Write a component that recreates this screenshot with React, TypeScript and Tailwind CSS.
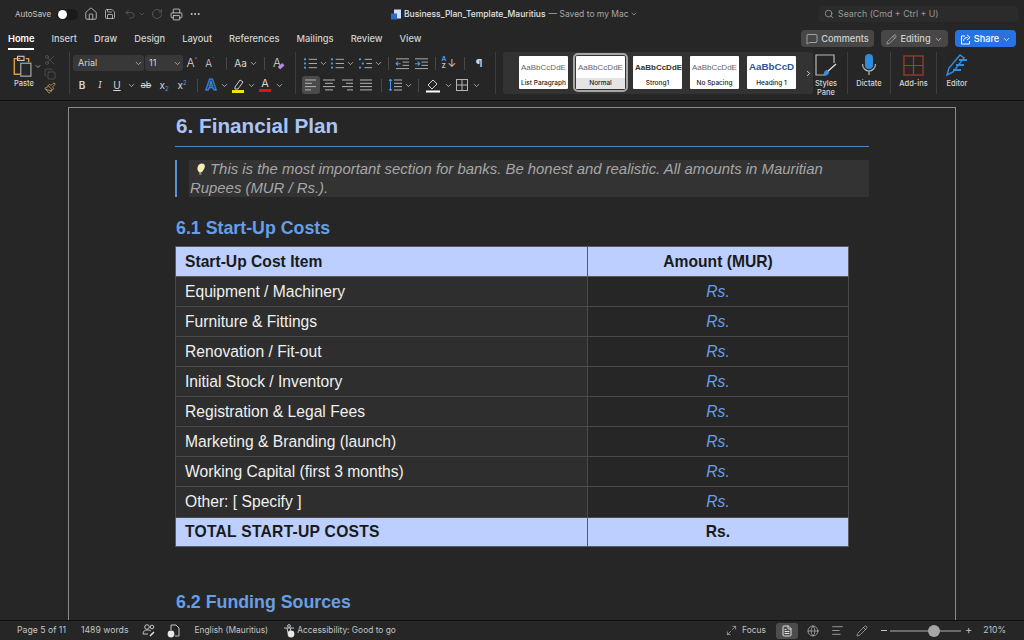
import React from "react";
import {
  ChevronDown, ChevronRight, Home, Save, Undo2, RotateCw, Printer, MoreHorizontal, Search,
  MessageSquare, Pencil, Maximize2, Globe, AlignLeft, FileText, Scissors, Copy, Paintbrush,
} from "lucide-react";

const Chev = ({ w = 10, className = "text-[#c8c8c8]" }: { w?: number; className?: string }) => (
  <span className="flex items-center justify-center shrink-0" style={{ width: w }}>
    <ChevronDown size={9} strokeWidth={2} className={className} />
  </span>
);

const Slot = ({ w, children, className = "" }: { w: number; children?: React.ReactNode; className?: string }) => (
  <span className={`flex items-center justify-center shrink-0 h-[18px] ${className}`} style={{ width: w }}>
    {children}
  </span>
);

const Div = ({ w }: { w: number }) => (
  <Slot w={w}>
    <span className="block w-px h-[13px] bg-[#484848]" />
  </Slot>
);

// lines used by list + alignment icons
const Lines = ({ kind }: { kind: "left" | "center" | "right" | "justify" }) => {
  const rows = {
    left: [[2, 13], [2, 9], [2, 13], [2, 8]],
    center: [[2, 14], [4, 12], [2, 14], [4, 12]],
    right: [[3, 14], [7, 14], [3, 14], [8, 14]],
    justify: [[2, 14], [2, 14], [2, 14], [2, 14]],
  }[kind];
  return (
    <svg width="16" height="14" viewBox="0 0 16 14" stroke="#b4b4b4" strokeWidth="1">
      {rows.map((r, i) => (
        <line key={i} x1={r[0]} x2={r[1]} y1={2 + i * 3.3} y2={2 + i * 3.3} />
      ))}
    </svg>
  );
};

const ListIcon = ({ kind }: { kind: "bullet" | "num" | "multi" }) => (
  <svg width="15" height="13" viewBox="0 0 16 14">
    <g stroke="#b4b4b4" strokeWidth="1">
      <line x1={kind === "multi" ? 7 : 6} x2="15" y1="2.5" y2="2.5" />
      <line x1={kind === "multi" ? 9 : 6} x2="15" y1="7" y2="7" />
      <line x1={kind === "multi" ? 7 : 6} x2="15" y1="11.5" y2="11.5" />
    </g>
    <g fill="#4a9be8">
      <rect x="1" y="1.5" width="2.2" height="2" />
      <rect x={kind === "multi" ? 4 : 1} y="6" width="2.2" height="2" />
      <rect x="1" y="10.4" width="2.2" height="2" />
    </g>
  </svg>
);

const Indent = ({ flip }: { flip?: boolean }) => (
  <svg width="15" height="13" viewBox="0 0 16 14">
    <g stroke="#b4b4b4" strokeWidth="1">
      <line x1="1" x2="15" y1="2" y2="2" />
      <line x1="8" x2="15" y1="5.5" y2="5.5" />
      <line x1="8" x2="15" y1="9" y2="9" />
      <line x1="1" x2="15" y1="12.5" y2="12.5" />
    </g>
    <path d={flip ? "M1 7.2h5M4 5l2.2 2.2L4 9.4" : "M6 7.2H1M3.2 5L1 7.2l2.2 2.2"} stroke="#4a9be8" strokeWidth="1.1" fill="none" />
  </svg>
);

const StyleCard = ({ sample, name, cls = "text-[#666] text-[8px]", selected }: { sample: string; name: string; cls?: string; selected?: boolean }) => (
  <div className={`shrink-0 rounded-[2px] -mt-px ${selected ? "outline-2 outline-[#a6a6a6] outline-offset-[1px]" : ""}`}>
    <div className="w-[49px] h-[33px] bg-white flex flex-col rounded-[1px]">
      <div className={`h-[22px] pt-px flex items-center pl-[2px] whitespace-nowrap font-['Liberation_Sans',Arial,sans-serif] ${cls}`}>{sample}</div>
      <div className={`h-[11px] leading-[10px] text-center text-[6.5px] text-[#222] font-medium ${selected ? "bg-[#e4e4e4]" : ""}`}>{name}</div>
    </div>
  </div>
);

const BigBtn = ({ icon, label, w }: { icon: React.ReactNode; label: React.ReactNode; w: number }) => (
  <div className="flex flex-col items-center shrink-0" style={{ width: w }}>
    <div className="h-[26px] flex items-center justify-center">{icon}</div>
    <div className="text-[7.5px] leading-[9px] text-center text-[#d6d6d6] font-medium mt-px whitespace-nowrap">{label}</div>
  </div>
);

const BarDiv = () => <span className="block w-px h-[42px] bg-[#3d3d3d] shrink-0" />;

const Ribbon = () => (
  <div className="h-[52px] flex items-start shrink-0 bg-[#262626] text-[#d6d6d6]">
    {/* clipboard */}
    <div className="w-[66px] flex pl-[10px] pt-[6px] shrink-0">
      <div className="flex flex-col items-center w-[28px]">
        <svg width="24" height="24" viewBox="0 0 26 24" fill="none">
          <path d="M9 4H2.5v17H9" stroke="#d79a3c" strokeWidth="1.6" />
          <path d="M15 4h3v4" stroke="#d79a3c" strokeWidth="1.6" />
          <rect x="6" y="1.5" width="7" height="4.5" stroke="#c9c9c9" strokeWidth="1.2" />
          <rect x="9.5" y="9" width="11" height="14" stroke="#a8a8a8" strokeWidth="1.3" />
        </svg>
        <span className="text-[7.5px] leading-[9px] mt-px font-medium">Paste</span>
      </div>
      <span className="-ml-[4px] h-[24px] flex"><Chev w={8} /></span>
      <div className="flex flex-col items-center ml-[2px] gap-[2px]">
        <Scissors size={12} className="text-[#5c6670]" strokeWidth={1.2} />
        <Copy size={12} className="text-[#666]" strokeWidth={1.2} />
        <Paintbrush size={12} className="text-[#d6b26a]" strokeWidth={1.5} />
      </div>
    </div>
    <Slot w={7} className="!h-[42px] mt-[4px]"><span className="block w-px h-[42px] bg-[#3d3d3d]" /></Slot>
    {/* font */}
    <div className="w-[218px] shrink-0 pt-[7px]">
      <div className="flex items-center h-[16px]">
        <div className="w-[71px] h-[16px] bg-[#383838] rounded-[3px] flex items-center justify-between pl-[5px] pr-[1px] text-[9px]">
          Arial
          <Chev />
        </div>
        <div className="w-[38px] ml-px h-[16px] bg-[#383838] rounded-[3px] flex items-center justify-between pl-[4px] pr-[1px] text-[9px]">
          11
          <Chev />
        </div>
        <Slot w={18} className="text-[12px] font-light">A<span className="text-[7px] text-[#4a9be8] -mt-[6px]">^</span></Slot>
        <Slot w={18} className="text-[10px] font-light">A<span className="text-[7px] text-[#4a9be8] -mt-[6px]">ˇ</span></Slot>
        <Div w={14} />
        <Slot w={15} className="text-[10px]">Aa</Slot>
        <Chev />
        <Div w={12} />
        <Slot w={18} className="text-[12px] font-light">
          A
          <svg className="-ml-[4px] mt-[5px]" width="8" height="8" viewBox="0 0 8 8">
            <rect x="1" y="2.5" width="6" height="3.5" rx="0.8" transform="rotate(-40 4 4)" fill="#b58ad8" />
          </svg>
        </Slot>
      </div>
      <div className="flex items-center mt-[5px] h-[18px] text-[10px]">
        <Slot w={18} className="font-semibold">B</Slot>
        <Slot w={18} className="italic font-serif">I</Slot>
        <Slot w={16} className="underline">U</Slot>
        <Chev w={12} />
        <Slot w={18} className="line-through text-[9px]">ab</Slot>
        <Slot w={18}>x<span className="text-[6px] text-[#4a9be8] mt-[6px]">2</span></Slot>
        <Slot w={18}>x<span className="text-[6px] text-[#4a9be8] -mt-[6px]">2</span></Slot>
        <Div w={12} />
        <Slot w={16} className="text-[15px] font-bold text-[#1d3a5c] [-webkit-text-stroke:1px_#3f8fdc]">A</Slot>
        <Chev />
        <Slot w={17}>
          <svg width="14" height="15" viewBox="0 0 14 15" fill="none">
            <path d="M4 9l5-7 3 2-5 7H4z" stroke="#d0d0d0" />
            <rect x="1" y="12" width="12" height="3" fill="#f4e400" />
          </svg>
        </Slot>
        <Chev />
        <Slot w={18}>
          <span className="flex flex-col items-center leading-[11px] text-[11px]">
            A<span className="block w-[12px] h-[3px] bg-[#e81010]" />
          </span>
        </Slot>
        <Chev />
      </div>
    </div>
    <Slot w={8} className="!h-[42px] mt-[4px]"><span className="block w-px h-[42px] bg-[#3d3d3d]" /></Slot>
    {/* paragraph */}
    <div className="w-[189px] pl-[3px] shrink-0 pt-[7px]">
      <div className="flex items-center h-[16px]">
        <Slot w={16}><ListIcon kind="bullet" /></Slot>
        <Chev />
        <Slot w={1} />
        <Slot w={16}><ListIcon kind="num" /></Slot>
        <Chev />
        <Slot w={2} />
        <Slot w={16}><ListIcon kind="multi" /></Slot>
        <Chev />
        <Div w={10} />
        <Slot w={18}><Indent /></Slot>
        <Slot w={1} />
        <Slot w={18}><Indent flip /></Slot>
        <Div w={10} />
        <Slot w={18}>
          <span className="flex flex-col text-[6.5px] leading-[7px] font-bold text-[#4a9be8]">A<span className="text-[#c4c4c4]">Z</span></span>
          <span className="text-[11px] text-[#c4c4c4] ml-[1px]">↓</span>
        </Slot>
        <Div w={12} />
        <Slot w={18} className="text-[11px] font-bold">¶</Slot>
      </div>
      <div className="flex items-center mt-[5px] h-[18px]">
        <Slot w={18} className="bg-[#4a4a4a] rounded-[3px]"><Lines kind="left" /></Slot>
        <Slot w={18}><Lines kind="center" /></Slot>
        <Slot w={18}><Lines kind="right" /></Slot>
        <Slot w={1} />
        <Slot w={18}><Lines kind="justify" /></Slot>
        <Div w={12} />
        <Slot w={16}>
          <svg width="14" height="14" viewBox="0 0 14 14">
            <g stroke="#b4b4b4" strokeWidth="1"><line x1="6" x2="14" y1="2" y2="2" /><line x1="6" x2="14" y1="5.3" y2="5.3" /><line x1="6" x2="14" y1="8.6" y2="8.6" /><line x1="6" x2="14" y1="12" y2="12" /></g>
            <path d="M2.5 1v12M1 3l1.5-2L4 3M1 11l1.5 2L4 11" stroke="#4a9be8" fill="none" />
          </svg>
        </Slot>
        <Chev />
        <Div w={10} />
        <Slot w={20}>
          <svg width="16" height="15" viewBox="0 0 16 15" fill="none">
            <path d="M3 7l5-5 4 4-5 5z" stroke="#d0d0d0" />
            <rect x="1" y="12.5" width="14" height="2" fill="#fff" />
          </svg>
        </Slot>
        <Chev />
        <Slot w={18}>
          <svg width="14" height="14" viewBox="0 0 14 14" stroke="#b4b4b4" fill="none"><rect x="1.5" y="1.5" width="11" height="11" /><path d="M7 1.5v11M1.5 7h11" /></svg>
        </Slot>
        <Chev />
      </div>
    </div>
    <Slot w={15} className="!h-[42px] mt-[4px]"><span className="block w-px h-[42px] bg-[#3d3d3d]" /></Slot>
    {/* style gallery */}
    <div className="w-[310px] h-[42px] mt-[4px] bg-[#333333] rounded-[3px] shrink-0 flex items-center pl-[16px] gap-[8px]">
      <StyleCard sample="AaBbCcDdE" name="List Paragraph" />
      <StyleCard sample="AaBbCcDdE" name="Normal" selected />
      <StyleCard sample="AaBbCcDdE" name="Strong1" cls="text-[8px] font-bold text-[#333]" />
      <StyleCard sample="AaBbCcDdE" name="No Spacing" />
      <StyleCard sample="AaBbCcD" name="Heading 1" cls="text-[9.8px] font-bold text-[#2f5597]" />
      <span className="flex-1 flex justify-center"><ChevronRight size={9} strokeWidth={2.5} /></span>
    </div>
    <div className="flex items-start pt-[4px] gap-[8px]">
      <BigBtn
        w={26}
        label={<>Styles<br />Pane</>}
        icon={
          <svg width="24" height="24" viewBox="0 0 24 24" fill="none">
            <path d="M20 10V2H2v20h9" stroke="#b8b8b8" strokeWidth="1.2" />
            <path d="M22 11l-9 8" stroke="#e0e0e0" strokeWidth="1.4" />
            <path d="M9 23c3 0 6-1 6-4l-2-2c-3 0-3 4-4 6z" fill="#3f8fdc" />
          </svg>
        }
      />
      <BarDiv />
      <BigBtn
        w={26}
        label="Dictate"
        icon={
          <svg width="16" height="24" viewBox="0 0 16 24" fill="none">
            <rect x="4" y="1" width="8" height="15" rx="4" fill="#2f8de0" />
            <path d="M1.5 11c0 4 3 7 6.5 7s6.5-3 6.5-7M8 18v4" stroke="#b8b8b8" strokeWidth="1.2" />
          </svg>
        }
      />
      <BarDiv />
      <BigBtn
        w={29}
        label="Add-ins"
        icon={
          <svg width="21" height="21" viewBox="0 0 22 22" fill="none" stroke="#a83a24" strokeWidth="1.3">
            <rect x="1" y="1" width="20" height="20" />
            <path d="M11 1v20M1 11h20" />
          </svg>
        }
      />
      <BarDiv />
      <BigBtn
        w={24}
        label="Editor"
        icon={
          <svg width="24" height="24" viewBox="0 0 24 24" fill="none" stroke="#2f8de0" strokeWidth="1.5">
            <path d="M2 22l2-7L15 2l4 3L8 19z" />
            <path d="M14 7h8M11 12h8M8 17h8" strokeWidth="2" />
          </svg>
        }
      />
    </div>
  </div>
);

const rows = [
  "Equipment / Machinery",
  "Furniture & Fittings",
  "Renovation / Fit-out",
  "Initial Stock / Inventory",
  "Registration & Legal Fees",
  "Marketing & Branding (launch)",
  "Working Capital (first 3 months)",
];

const Page = () => (
  <div className="flex-1 min-h-0 overflow-hidden bg-[#262626] pt-[6px] pl-[68px] border-t border-[#0d0d0d]">
    <div className="w-[888px] h-[520px] border-l border-r border-t border-[#8a8a8a] pl-[106px] pr-[86px] font-['Liberation_Sans',Arial,sans-serif]">
      <h1 className="text-[20.7px] leading-[25px] font-bold text-[#a9c4f7] pl-px pt-[5px] pb-[8px] border-b border-[#4f86c6]">6. Financial Plan</h1>
      <div className="mt-[13px] h-[37px] flex">
        <div className="w-[2px] bg-[#5b92d6] shrink-0" />
        <div className="ml-[12px] flex-1 bg-[#333333] text-[14.9px] leading-[19px] italic text-[#a6a6a6] pl-[1px]">
          <svg className="inline-block align-top mt-[2px] ml-[5px] mr-[3px]" width="12" height="15" viewBox="0 0 12 15">
            <path d="M3 9C1.5 6 3 1.5 7 1.5c3 0 3.5 3 2 5.5L7.5 9.5 5 11z" fill="#f6eeb8" />
            <path d="M4 11l3 .5-1 1.5H4.5z" fill="#888" />
          </svg>
          This is the most important section for banks. Be honest and realistic. All amounts in Mauritian Rupees (MUR / Rs.).
        </div>
      </div>
      <h2 className="mt-[21px] text-[17.8px] leading-[21px] font-bold text-[#669fe6] pl-px">6.1 Start-Up Costs</h2>
      <table className="mt-[7px] w-[674px] border-collapse text-[15.65px] table-fixed">
        <colgroup>
          <col className="w-[412px]" />
          <col />
        </colgroup>
        <tbody>
          <tr className="h-[30px] bg-[#bccffe] text-[#1a1a1a] font-bold">
            <td className="border border-[#5a5a5a] pl-[9px]">Start-Up Cost Item</td>
            <td className="border border-[#5a5a5a] text-center">Amount (MUR)</td>
          </tr>
          {rows.map((r) => (
            <tr key={r} className="h-[30px] text-[#f0f0f0]">
              <td className="border border-[#4a4a4a] pl-[9px] bg-[#2e2e2e]">{r}</td>
              <td className="border border-[#4a4a4a] text-center italic text-[#669fe6]">Rs.</td>
            </tr>
          ))}
          <tr className="h-[31px] text-[#f0f0f0]">
            <td className="border border-[#4a4a4a] pl-[9px] bg-[#2e2e2e]">Other: [ Specify ]</td>
            <td className="border border-[#4a4a4a] text-center italic text-[#669fe6]">Rs.</td>
          </tr>
          <tr className="h-[29px] bg-[#bccffe] text-[#1a1a1a] font-bold">
            <td className="border border-[#5a5a5a] pl-[9px] tracking-[0.25px]">TOTAL START-UP COSTS</td>
            <td className="border border-[#5a5a5a] text-center">Rs.</td>
          </tr>
        </tbody>
      </table>
      <h2 className="mt-[45px] text-[17.8px] leading-[21px] font-bold text-[#669fe6] pl-px">6.2 Funding Sources</h2>
    </div>
  </div>
);

const StatusBar = () => (
  <div className="h-[20px] shrink-0 bg-[#262626] border-t border-[#0d0d0d] flex items-center text-[8.7px] text-[#c4c4c4] pl-[17px]">
    <span>Page 5 of 11</span>
    <span className="ml-[15px]">1489 words</span>
    <svg className="ml-[14px]" width="14" height="13" viewBox="0 0 14 13" fill="none" stroke="#c4c4c4">
      <circle cx="5" cy="3" r="2.3" />
      <circle cx="10" cy="3" r="1.8" />
      <path d="M1 10c0-3 2-4 4-4s3 .5 4 1M1 10h5" />
      <path d="M8 12l4-4" stroke="#e8e8e8" strokeWidth="1.5" />
    </svg>
    <svg className="ml-[11px]" width="13" height="14" viewBox="0 0 13 14" fill="none" stroke="#c4c4c4">
      <path d="M4 1h5l3 3v8H8M4 1v5" />
      <circle cx="4" cy="10" r="3.4" fill="#e8e8e8" stroke="none" />
    </svg>
    <span className="ml-[14px] text-[8.4px]">English (Mauritius)</span>
    <svg className="ml-[15px]" width="13" height="14" viewBox="0 0 13 14" fill="none" stroke="#c4c4c4">
      <circle cx="6" cy="2" r="1.4" />
      <path d="M1 4h10M4 4l1 5M8 4l-1 3" />
      <circle cx="8" cy="10" r="3.4" fill="#e8e8e8" stroke="none" />
    </svg>
    <span className="ml-[1px] text-[8.4px]">Accessibility: Good to go</span>
    <div className="ml-auto flex items-center pr-[18px]">
      <Maximize2 size={11} strokeWidth={1.4} />
      <span className="ml-[5px] text-[8.4px]">Focus</span>
      <span className="ml-[10px] w-[22px] h-[16px] bg-[#4d4d4d] rounded-[3px] flex items-center justify-center">
        <FileText size={12} className="text-[#e0e0e0]" strokeWidth={2} />
      </span>
      <Globe size={12} strokeWidth={1.3} className="ml-[9px]" />
      <AlignLeft size={13} strokeWidth={1.3} className="ml-[12px]" />
      <Pencil size={12} strokeWidth={1.3} className="ml-[12px]" />
      <span className="ml-[13px] w-[6px] h-px bg-[#c4c4c4]" />
      <span className="ml-[3px] w-[71px] h-[2px] bg-[#6a6a6a] flex items-center">
        <span className="ml-[38px] w-[12px] h-[12px] rounded-full bg-[#a6a6a6]" />
      </span>
      <span className="ml-[4px] text-[11px] leading-none">+</span>
      <span className="ml-[11px]">210%</span>
    </div>
  </div>
);

export default function App() {
  return (
    <div className="w-[1024px] h-[640px] flex flex-col overflow-hidden bg-[#262626] font-['Inter','Noto_Sans',sans-serif] text-[#d6d6d6]">
      {/* title bar */}
      <div className="h-[28px] shrink-0 flex items-center relative">
        <span className="ml-[15px] text-[8px] text-[#c8c8c8]">AutoSave</span>
        <span className="ml-[6px] w-[21px] h-[11px] rounded-full bg-[#1a1a1a] flex items-center">
          <span className="w-[9px] h-[9px] ml-[1px] rounded-full bg-white" />
        </span>
        <Home size={14} className="ml-[6px]" strokeWidth={1.3} />
        <Save size={12} className="ml-[6px]" strokeWidth={1.4} />
        <Undo2 size={12} className="ml-[8px] text-[#666]" strokeWidth={1.4} />
        <ChevronDown size={8} className="ml-[2px] text-[#666]" />
        <RotateCw size={12} className="ml-[5px] text-[#666]" strokeWidth={1.4} />
        <Printer size={13} className="ml-[7px]" strokeWidth={1.5} />
        <MoreHorizontal size={12} className="ml-[6px]" />
        <div className="absolute left-[391px] top-0 h-[28px] flex items-center text-[8.5px]">
          <svg width="10" height="11" viewBox="0 0 10 11">
            <rect x="3" y="0.5" width="7" height="9" fill="#cfe0f6" />
            <rect x="0" y="4.5" width="6" height="6" fill="#2b6bd0" />
          </svg>
          <span className="ml-[3px] text-[#e4e4e4] font-medium">Business_Plan_Template_Mauritius</span>
          <span className="ml-[3px] text-[#a8a8a8]">— Saved to my Mac</span>
          <ChevronDown size={8} className="ml-[1px] text-[#a8a8a8]" />
        </div>
        <div className="ml-auto mr-[6px] w-[199px] h-[16px] bg-[#2b2b2b] rounded-[3px] flex items-center pl-[5px] text-[8.8px] text-[#9a9a9a]">
          <Search size={10} />
          <span className="ml-[4px]">Search (Cmd + Ctrl + U)</span>
        </div>
      </div>
      {/* tabs */}
      <div className="h-[20px] shrink-0 flex items-start relative text-[9.3px] font-medium text-[#d0d0d0]">
        <div className="pl-[8px] flex gap-[17px] pt-[4px]">
          <span className="text-white font-semibold border-b-2 border-white pb-[2px] h-[18px]">Home</span>
          {["Insert", "Draw", "Design", "Layout", "References", "Mailings", "Review", "View"].map((t) => (
            <span key={t}>{t}</span>
          ))}
        </div>
        <div className="ml-auto mr-[8px] mt-[2px] flex gap-[7px] text-[9.2px]">
          <span className="w-[73px] h-[17px] pt-px bg-[#474747] rounded-[4px] flex items-center justify-center gap-[3px]">
            <MessageSquare size={12} strokeWidth={1.3} />Comments
          </span>
          <span className="w-[67px] h-[17px] pt-px bg-[#474747] rounded-[4px] flex items-center justify-center gap-[3px]">
            <Pencil size={11} strokeWidth={1.3} />Editing
            <ChevronDown size={9} />
          </span>
          <span className="w-[61px] h-[17px] pt-px bg-[#2773e6] text-white rounded-[4px] flex items-center justify-center gap-[3px]">
            <svg width="11" height="11" viewBox="0 0 11 11" fill="none" stroke="white" strokeWidth="1">
              <path d="M5 2H1.5v8h8V7" />
              <path d="M3.5 7c0-2.5 2-3.5 4-3.5M7 1l3 2.500L7 6" />
            </svg>
            Share
            <ChevronDown size={9} />
          </span>
        </div>
      </div>
      <Ribbon />
      <Page />
      <StatusBar />
    </div>
  );
}
